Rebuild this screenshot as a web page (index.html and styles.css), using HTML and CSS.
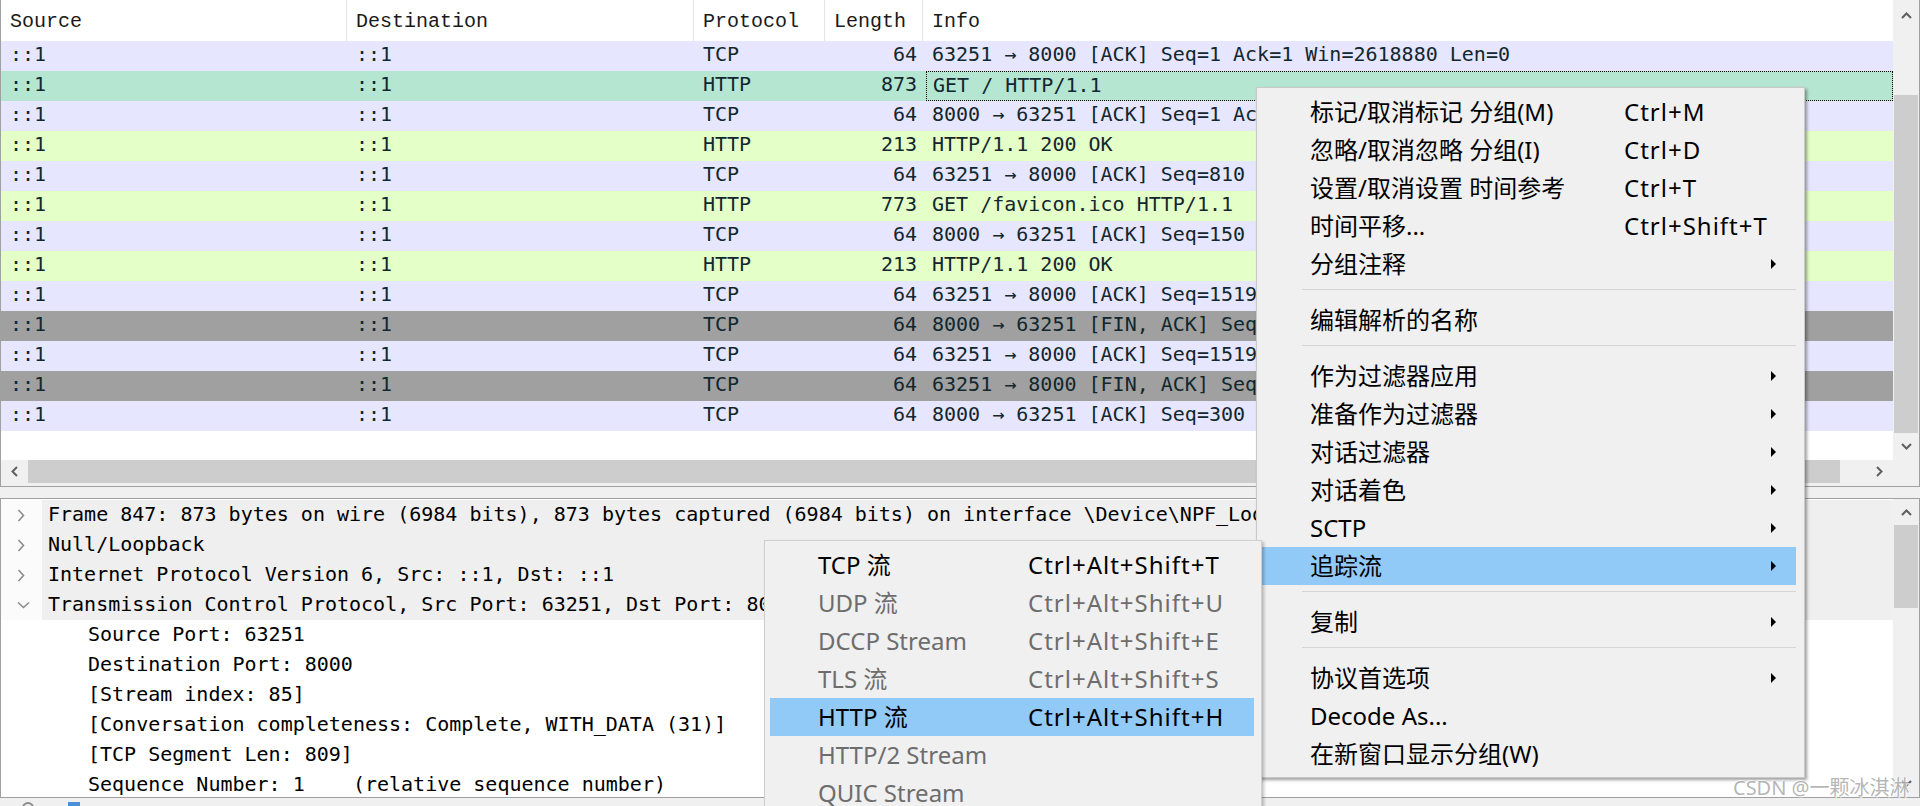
FILE: index.html
```html
<!DOCTYPE html>
<html lang="zh-CN">
<head>
<meta charset="utf-8">
<title>Wireshark</title>
<link rel="stylesheet" href="styles.css">
</head>
<body>
<div class="app">
  <section class="pane packet-list">
    <div class="pl-body">
      <div class="pl-table">
        <div class="pl-row pl-head">
          <div class="c">Source</div><div class="c">Destination</div><div class="c">Protocol</div><div class="c">Length</div><div class="c">Info</div>
        </div>
        <div class="pl-row tcp"><div class="c">::1</div><div class="c">::1</div><div class="c">TCP</div><div class="c len">64</div><div class="c info">63251 → 8000 [ACK] Seq=1 Ack=1 Win=2618880 Len=0</div></div>
        <div class="pl-row sel"><div class="c">::1</div><div class="c">::1</div><div class="c">HTTP</div><div class="c len">873</div><div class="c info focus">GET / HTTP/1.1</div></div>
        <div class="pl-row tcp"><div class="c">::1</div><div class="c">::1</div><div class="c">TCP</div><div class="c len">64</div><div class="c info">8000 → 63251 [ACK] Seq=1 Ack=810 Win=2618880 Len=0</div></div>
        <div class="pl-row http"><div class="c">::1</div><div class="c">::1</div><div class="c">HTTP</div><div class="c len">213</div><div class="c info">HTTP/1.1 200 OK</div></div>
        <div class="pl-row tcp"><div class="c">::1</div><div class="c">::1</div><div class="c">TCP</div><div class="c len">64</div><div class="c info">63251 → 8000 [ACK] Seq=810 Ack=150 Win=2618880 Len=0</div></div>
        <div class="pl-row http"><div class="c">::1</div><div class="c">::1</div><div class="c">HTTP</div><div class="c len">773</div><div class="c info">GET /favicon.ico HTTP/1.1</div></div>
        <div class="pl-row tcp"><div class="c">::1</div><div class="c">::1</div><div class="c">TCP</div><div class="c len">64</div><div class="c info">8000 → 63251 [ACK] Seq=150 Ack=1519 Win=2618880 Len=0</div></div>
        <div class="pl-row http"><div class="c">::1</div><div class="c">::1</div><div class="c">HTTP</div><div class="c len">213</div><div class="c info">HTTP/1.1 200 OK</div></div>
        <div class="pl-row tcp"><div class="c">::1</div><div class="c">::1</div><div class="c">TCP</div><div class="c len">64</div><div class="c info">63251 → 8000 [ACK] Seq=1519 Ack=300 Win=2618880 Len=0</div></div>
        <div class="pl-row fin"><div class="c">::1</div><div class="c">::1</div><div class="c">TCP</div><div class="c len">64</div><div class="c info">8000 → 63251 [FIN, ACK] Seq=300 Ack=1519 Win=2618880 Len=0</div></div>
        <div class="pl-row tcp"><div class="c">::1</div><div class="c">::1</div><div class="c">TCP</div><div class="c len">64</div><div class="c info">63251 → 8000 [ACK] Seq=1519 Ack=301 Win=2618880 Len=0</div></div>
        <div class="pl-row fin"><div class="c">::1</div><div class="c">::1</div><div class="c">TCP</div><div class="c len">64</div><div class="c info">63251 → 8000 [FIN, ACK] Seq=1519 Ack=301 Win=2618880 Len=0</div></div>
        <div class="pl-row tcp"><div class="c">::1</div><div class="c">::1</div><div class="c">TCP</div><div class="c len">64</div><div class="c info">8000 → 63251 [ACK] Seq=300 Ack=1520 Win=2618880 Len=0</div></div>
      </div>
      <div class="vscroll">
        <div class="vs-btn vs-up"><svg width="11" height="7" viewBox="0 0 11 7"><polyline points="1,6 5.5,1.5 10,6" fill="none" stroke="#606060" stroke-width="2"/></svg></div>
        <div class="vs-track"><div class="vs-thumb"></div></div>
        <div class="vs-btn vs-down"><svg width="11" height="7" viewBox="0 0 11 7"><polyline points="1,1 5.5,5.5 10,1" fill="none" stroke="#606060" stroke-width="2"/></svg></div>
      </div>
    </div>
    <div class="hbar">
      <div class="hscroll">
        <div class="hs-btn"><svg width="7" height="11" viewBox="0 0 7 11"><polyline points="6,1 1.5,5.5 6,10" fill="none" stroke="#606060" stroke-width="2"/></svg></div>
        <div class="hs-track"><div class="hs-thumb"></div></div>
        <div class="hs-btn"><svg width="7" height="11" viewBox="0 0 7 11"><polyline points="1,1 5.5,5.5 1,10" fill="none" stroke="#606060" stroke-width="2"/></svg></div>
      </div>
      <div class="corner"></div>
    </div>
  </section>

  <div class="splitter"></div>

  <section class="pane details">
    <div class="tree">
      <div class="tr top"><div class="tw"><svg width="8" height="13" viewBox="0 0 8 13"><polyline points="1.5,1 6.5,6.5 1.5,12" fill="none" stroke="#8c8c8c" stroke-width="1.6"/></svg></div><div class="tx">Frame 847: 873 bytes on wire (6984 bits), 873 bytes captured (6984 bits) on interface \Device\NPF_Loopback, id 0</div></div>
      <div class="tr top"><div class="tw"><svg width="8" height="13" viewBox="0 0 8 13"><polyline points="1.5,1 6.5,6.5 1.5,12" fill="none" stroke="#8c8c8c" stroke-width="1.6"/></svg></div><div class="tx">Null/Loopback</div></div>
      <div class="tr top"><div class="tw"><svg width="8" height="13" viewBox="0 0 8 13"><polyline points="1.5,1 6.5,6.5 1.5,12" fill="none" stroke="#8c8c8c" stroke-width="1.6"/></svg></div><div class="tx">Internet Protocol Version 6, Src: ::1, Dst: ::1</div></div>
      <div class="tr top"><div class="tw"><svg width="13" height="8" viewBox="0 0 13 8"><polyline points="1,1.5 6.5,6.5 12,1.5" fill="none" stroke="#8c8c8c" stroke-width="1.6"/></svg></div><div class="tx">Transmission Control Protocol, Src Port: 63251, Dst Port: 8000, Seq: 1, Ack: 1, Len: 809</div></div>
      <div class="tr child"><div class="tw"></div><div class="tx">Source Port: 63251</div></div>
      <div class="tr child"><div class="tw"></div><div class="tx">Destination Port: 8000</div></div>
      <div class="tr child"><div class="tw"></div><div class="tx">[Stream index: 85]</div></div>
      <div class="tr child"><div class="tw"></div><div class="tx">[Conversation completeness: Complete, WITH_DATA (31)]</div></div>
      <div class="tr child"><div class="tw"></div><div class="tx">[TCP Segment Len: 809]</div></div>
      <div class="tr child"><div class="tw"></div><div class="tx pre">Sequence Number: 1    (relative sequence number)</div></div>
    </div>
    <div class="vscroll dscroll">
      <div class="vs-btn d-up"><svg width="11" height="7" viewBox="0 0 11 7"><polyline points="1,6 5.5,1.5 10,6" fill="none" stroke="#606060" stroke-width="2"/></svg></div>
      <div class="d-track"><div class="d-thumb"></div></div>
      <div class="vs-btn d-down"><svg width="11" height="7" viewBox="0 0 11 7"><polyline points="1,1 5.5,5.5 10,1" fill="none" stroke="#606060" stroke-width="2"/></svg></div>
    </div>
  </section>

  <footer class="status">
    <span class="st-icon"></span>
    <span class="st-blue"></span>
  </footer>
</div>

<div class="menu main-menu">
  <div class="mi"><span></span><span class="lbl">标记/取消标记 分组(M)</span><span class="sc">Ctrl+M</span><span></span></div>
  <div class="mi"><span></span><span class="lbl">忽略/取消忽略 分组(I)</span><span class="sc">Ctrl+D</span><span></span></div>
  <div class="mi"><span></span><span class="lbl">设置/取消设置 时间参考</span><span class="sc">Ctrl+T</span><span></span></div>
  <div class="mi"><span></span><span class="lbl">时间平移...</span><span class="sc">Ctrl+Shift+T</span><span></span></div>
  <div class="mi"><span></span><span class="lbl">分组注释</span><span class="sc"></span><span class="arr"></span></div>
  <div class="sep"></div>
  <div class="mi"><span></span><span class="lbl">编辑解析的名称</span><span class="sc"></span><span></span></div>
  <div class="sep"></div>
  <div class="mi"><span></span><span class="lbl">作为过滤器应用</span><span class="sc"></span><span class="arr"></span></div>
  <div class="mi"><span></span><span class="lbl">准备作为过滤器</span><span class="sc"></span><span class="arr"></span></div>
  <div class="mi"><span></span><span class="lbl">对话过滤器</span><span class="sc"></span><span class="arr"></span></div>
  <div class="mi"><span></span><span class="lbl">对话着色</span><span class="sc"></span><span class="arr"></span></div>
  <div class="mi"><span></span><span class="lbl">SCTP</span><span class="sc"></span><span class="arr"></span></div>
  <div class="mi hl"><span></span><span class="lbl">追踪流</span><span class="sc"></span><span class="arr"></span></div>
  <div class="sep"></div>
  <div class="mi"><span></span><span class="lbl">复制</span><span class="sc"></span><span class="arr"></span></div>
  <div class="sep"></div>
  <div class="mi"><span></span><span class="lbl">协议首选项</span><span class="sc"></span><span class="arr"></span></div>
  <div class="mi"><span></span><span class="lbl">Decode As...</span><span class="sc"></span><span></span></div>
  <div class="mi"><span></span><span class="lbl">在新窗口显示分组(W)</span><span class="sc"></span><span></span></div>
</div>

<div class="menu sub-menu">
  <div class="si"><span></span><span class="lbl">TCP 流</span><span class="sc">Ctrl+Alt+Shift+T</span></div>
  <div class="si dis"><span></span><span class="lbl">UDP 流</span><span class="sc">Ctrl+Alt+Shift+U</span></div>
  <div class="si dis"><span></span><span class="lbl">DCCP Stream</span><span class="sc">Ctrl+Alt+Shift+E</span></div>
  <div class="si dis"><span></span><span class="lbl">TLS 流</span><span class="sc">Ctrl+Alt+Shift+S</span></div>
  <div class="si hl"><span></span><span class="lbl">HTTP 流</span><span class="sc">Ctrl+Alt+Shift+H</span></div>
  <div class="si dis"><span></span><span class="lbl">HTTP/2 Stream</span><span class="sc"></span></div>
  <div class="si dis"><span></span><span class="lbl">QUIC Stream</span><span class="sc"></span></div>
</div>

<div class="watermark">CSDN @一颗冰淇淋</div>
</body>
</html>
```

FILE: styles.css
```css
* { box-sizing: border-box; }
html, body { margin: 0; padding: 0; }
body {
  width: 1920px;
  height: 806px;
  overflow: hidden;
  position: relative;
  background: #f0f0f0;
  font-family: "DejaVu Sans Mono", "Liberation Mono", monospace;
}
.app { display: flex; flex-direction: column; height: 806px; }

.pane {
  background: #fff;
  border-left: 1px solid #a0a0a0;
  border-right: 1px solid #a0a0a0;
}

/* ---------- packet list ---------- */
.packet-list {
  height: 487px;
  border-bottom: 1px solid #a0a0a0;
  display: flex;
  flex-direction: column;
}
.pl-body { display: flex; height: 460px; }
.pl-table { flex: 1; background: #fff; overflow: hidden; }

.pl-row {
  display: grid;
  grid-template-columns: 346px 347px 131px 98px 1fr;
  height: 30px;
  align-items: center;
  font-size: 20px;
  color: #12272e;
  white-space: nowrap;
}
.pl-row .c { padding-left: 9px; padding-bottom: 4px; line-height: 26px; overflow: hidden; }
.pl-row .len { padding-left: 0; padding-right: 6px; text-align: right; }
.pl-row .info { overflow: visible; }

.pl-head {
  height: 41px;
  background: #fff;
  color: #1a1a1a;
  font-family: "Liberation Mono", monospace;
  align-items: stretch;
}
.pl-head .c {
  display: flex;
  align-items: center;
  border-right: 1px solid #e6e6e6;
  padding-left: 9px;
  padding-bottom: 0;
  padding-top: 3px;
}
.pl-head .c:last-child { border-right: none; }

.tcp { background: #e7e6ff; }
.http { background: #e4ffc7; }
.fin { background: #a0a0a0; }
.sel { background: #b5e6d2; }
.pl-row .focus {
  height: 30px;
  display: flex;
  align-items: center;
  margin-left: 3px;
  padding-left: 6px;
  padding-bottom: 3px;
  border: 1px dotted #000;
}

/* scrollbars */
.vscroll {
  width: 26px;
  background: #f0f0f0;
  display: flex;
  flex-direction: column;
}
.vs-btn { display: flex; align-items: center; justify-content: center; }
.vs-up { height: 30px; }
.vs-track { height: 403px; padding-top: 65px; }
.vs-thumb { height: 338px; margin: 0 1px; background: #cdcdcd; }
.vs-down { flex: 1; }

.hbar { display: flex; height: 26px; background: #f0f0f0; }
.hscroll { flex: 1; display: flex; height: 23px; }
.hs-btn { width: 27px; display: flex; align-items: center; justify-content: center; }
.hs-track { flex: 1; }
.hs-thumb { width: 1812px; height: 23px; background: #cdcdcd; }
.corner { width: 26px; }

.splitter { height: 11px; background: #f0f0f0; }

/* ---------- details ---------- */
.details {
  height: 300px;
  border-top: 1px solid #a0a0a0;
  border-bottom: 1px solid #a0a0a0;
  display: flex;
}
.tree {
  flex: 1;
  padding-top: 1px;
  overflow: hidden;
  font-size: 20px;
  color: #000;
}
.tr { display: flex; height: 30px; white-space: nowrap; }
.tw {
  width: 41px;
  flex: none;
  display: flex;
  align-items: center;
  padding-left: 16px;
  background: #fbfbfb;
}
.tx {
  flex: 1;
  display: flex;
  align-items: center;
  padding-left: 6px;
  padding-bottom: 3px;
  overflow: hidden;
}
.tr.top .tx { background: #efefef; }
.tr.child .tw { background: #fff; }
.tr.child .tx { padding-left: 46px; }
.pre { white-space: pre; }

.dscroll { height: 298px; }
.d-up { height: 26px; }
.d-track { height: 244px; }
.d-thumb { height: 83px; margin: 0 1px; background: #cdcdcd; }
.d-down { flex: 1; }

/* ---------- status bar ---------- */
.status {
  height: 8px;
  background: #f0f0f0;
  display: flex;
  align-items: flex-start;
  gap: 34px;
  padding: 4px 0 0 22px;
  overflow: hidden;
}
.st-icon {
  width: 12px;
  height: 12px;
  border: 2px solid #8a8a8a;
  border-radius: 50%;
}
.st-blue { width: 12px; height: 10px; background: #4a8fd8; }

/* ---------- context menus ---------- */
.menu {
  position: absolute;
  background: #f0f0f0;
  border: 1px solid #c9c9c9;
  font-family: "Noto Sans", "Noto Sans CJK SC", sans-serif;
  font-size: 24px;
  color: #000;
  white-space: nowrap;
}
.menu .sc { letter-spacing: 1px; }
.main-menu {
  left: 1256px;
  top: 87px;
  width: 549px;
  height: 691px;
  padding: 5px 8px 4px 5px;
  box-shadow: 2px 2px 3px rgba(0, 0, 0, 0.38);
  z-index: 2;
}
.mi {
  display: grid;
  grid-template-columns: 48px 314px 1fr 25px;
  height: 38px;
  align-items: center;
  line-height: 38px;
}
.mi.hl, .si.hl { background: #91c9f7; }
.arr {
  width: 0;
  height: 0;
  border-left: 5px solid #000;
  border-top: 5px solid transparent;
  border-bottom: 5px solid transparent;
}
.sep { height: 18px; padding-top: 6px; }
.sep::before {
  content: "";
  display: block;
  height: 1px;
  margin-left: 40px;
  background: #d5d5d5;
}

.sub-menu {
  left: 764px;
  top: 540px;
  width: 498px;
  height: 280px;
  padding: 5px 7px 0 5px;
  border-color: #cfcfcf;
  box-shadow: 2px 2px 3px rgba(0, 0, 0, 0.25);
  z-index: 3;
}
.si {
  display: grid;
  grid-template-columns: 48px 210px 1fr;
  height: 38px;
  align-items: center;
  line-height: 38px;
}
.si.dis { color: #6d6d6d; }

.watermark {
  position: absolute;
  left: 1733px;
  top: 775px;
  font-family: "Noto Sans", "Noto Sans CJK SC", sans-serif;
  font-size: 20px;
  line-height: 26px;
  color: rgba(150, 150, 150, 0.7);
  text-shadow: 1px 1px 0 rgba(255, 255, 255, 0.9), -1px -1px 0 rgba(255, 255, 255, 0.6);
  z-index: 5;
  white-space: nowrap;
}
```
